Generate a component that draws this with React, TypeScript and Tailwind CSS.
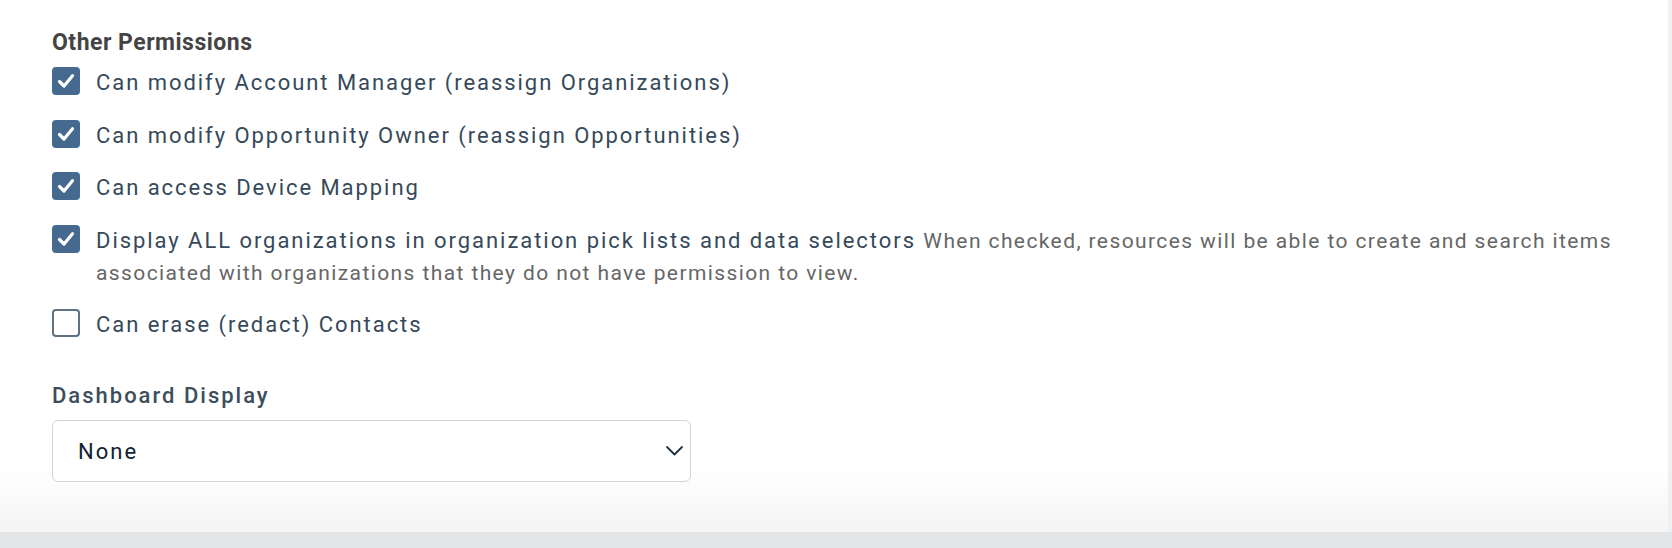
import React from "react";

function Check({ checked }: { checked: boolean }) {
  if (checked) {
    return (
      <span className="flex h-[28px] w-[28px] shrink-0 items-center justify-center rounded-[4px] bg-[#45698f]">
        <svg width="28" height="28" viewBox="0 0 28 28" fill="none">
          <path d="M7.5 14.5 L12 19 L20.5 8.8" stroke="white" strokeWidth="3.2" strokeLinecap="round" strokeLinejoin="round" />
        </svg>
      </span>
    );
  }
  return <span className="h-[28px] w-[28px] shrink-0 rounded-[4px] border-2 border-[#5f7283] bg-white" />;
}

function Row({ checked, children }: { checked: boolean; children: React.ReactNode }) {
  return (
    <div className="flex items-start gap-[16px]">
      <Check checked={checked} />
      <div className="text-[22px] leading-[32px] tracking-[1.95px] text-[#35495a]">{children}</div>
    </div>
  );
}

export default function App() {
  return (
    <div className="flex h-[548px] w-[1672px] flex-col bg-[#e3e5e6] font-['Roboto',sans-serif]">
      <div className="flex h-[532px]">
        <div className="flex w-[1668px] flex-col bg-[linear-gradient(to_bottom,#ffffff_0px,#ffffff_470px,#f4f4f4_532px)] pl-[52px] pr-[28px] pt-[29px]">
          <h2 className="text-[23px] font-bold leading-[28px] tracking-[0.5px] text-[#444444]">Other Permissions</h2>
          <div className="mt-[10px] flex flex-col gap-[20.5px]">
            <Row checked>Can modify Account Manager (reassign Organizations)</Row>
            <Row checked>Can modify Opportunity Owner (reassign Opportunities)</Row>
            <Row checked>Can access Device Mapping</Row>
            <Row checked>
              Display ALL organizations in organization pick lists and data selectors{" "}
              <span className="text-[21px] tracking-[1.4px] text-[#666666]">
                When checked, resources will be able to create and search items associated with organizations that they do not have permission to view.
              </span>
            </Row>
            <Row checked={false}>Can erase (redact) Contacts</Row>
          </div>
          <label className="mt-[41px] text-[22px] font-medium leading-[28px] tracking-[2px] text-[#3c4e5c]">Dashboard Display</label>
          <div className="mt-[10px] flex h-[62px] w-[639px] items-center justify-between rounded-[6px] border-[1.5px] border-[#cfd4d8] bg-white pl-[25px] pr-[7px]">
            <span className="text-[22px] tracking-[2px] text-[#0f2233]">None</span>
            <svg width="17" height="10" viewBox="0 0 17 10" fill="none">
              <path d="M1 1 L8.5 8.5 L16 1" stroke="#213445" strokeWidth="1.8" strokeLinecap="round" strokeLinejoin="round" />
            </svg>
          </div>
        </div>
        <div className="flex-1 bg-[#eef0f1]" />
      </div>
    </div>
  );
}
